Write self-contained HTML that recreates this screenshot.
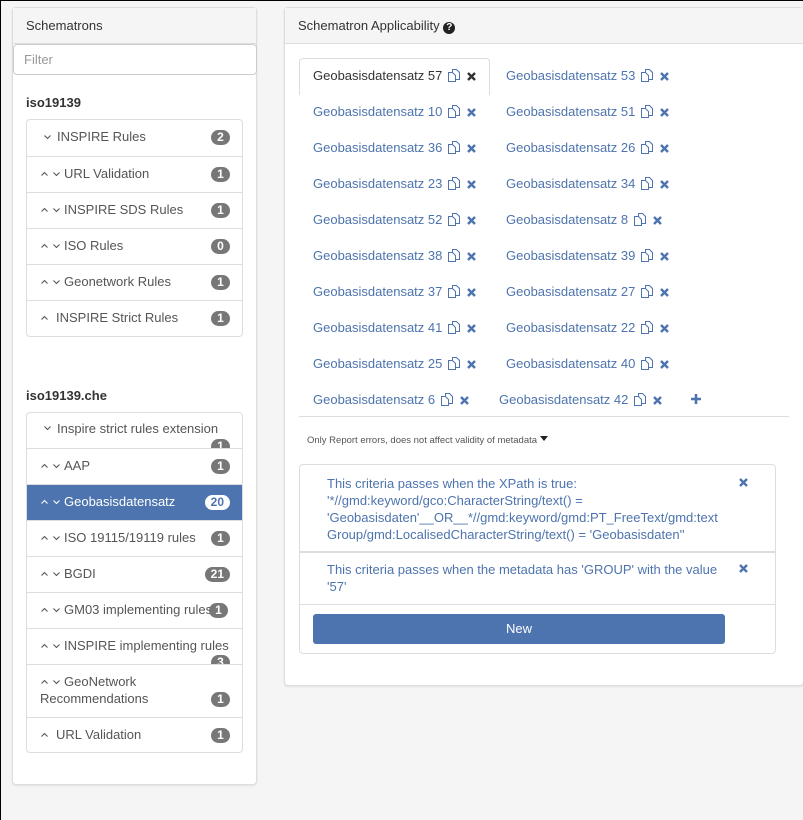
<!DOCTYPE html>
<html><head><meta charset="utf-8"><style>
*{box-sizing:border-box;margin:0;padding:0}
body{width:803px;height:820px;background:#f5f5f5;font-family:"Liberation Sans",sans-serif;font-size:13px;color:#333;position:relative;overflow:hidden}
.abs{position:absolute}
.panel{position:absolute;background:#fff;border:1px solid #ddd;border-radius:4px;box-shadow:0 1px 2px rgba(0,0,0,.08)}
.ph{position:absolute;left:0;right:0;top:0;height:36px;background:#f5f5f5;border-bottom:1px solid #ddd;padding:10px 13px;font-size:13px;color:#333}
.list{position:absolute;left:26px;width:217px;border:1px solid #ddd;border-radius:4px;background:#fff;overflow:hidden}
.row{position:relative;border-top:1px solid #ddd;height:36px;color:#555;font-size:13px;overflow:hidden}
.row:first-child{border-top:none}
.row .t{position:absolute;left:37px;top:9px}
.row .c{position:absolute;top:14px;left:14px;width:30px;height:6px}
.badge{position:absolute;right:12px;top:10px;min-width:19px;height:15px;border-radius:8px;background:#777;color:#fff;font-weight:bold;font-size:12px;line-height:15px;text-align:center;padding:0 6px}
.row.act{background:#4d74ae;color:#fff}
.row.act .badge{background:#fff;color:#4d74ae}
.tab{position:absolute;font-size:13px;color:#4d74ae;white-space:nowrap}
.tab svg{vertical-align:-2px;margin-left:6px}
.cr{position:absolute;left:27px;color:#4d74ae;font-size:13px;line-height:17px;width:410px}
</style></head><body>
<div class="abs" style="left:0;top:0;width:1px;height:820px;background:#000"></div>
<div class="abs" style="left:0;top:0;width:803px;height:1px;background:#000"></div>
<svg width="0" height="0" style="position:absolute"><defs>
<g id="up"><polyline points="0.5,4.5 3.5,1.5 6.5,4.5" fill="none" stroke="#555" stroke-width="1.1"/></g>
<g id="dn"><polyline points="0.5,1.5 3.5,4.5 6.5,1.5" fill="none" stroke="#555" stroke-width="1.1"/></g>
<g id="upw"><polyline points="0.5,4.5 3.5,1.5 6.5,4.5" fill="none" stroke="#fff" stroke-width="1.1"/></g>
<g id="dnw"><polyline points="0.5,1.5 3.5,4.5 6.5,1.5" fill="none" stroke="#fff" stroke-width="1.1"/></g>
<g id="cp"><path d="M4.5 0.5h4l3 3v7h-7z" fill="#fff" stroke="#4d74ae" stroke-width="1"/><path d="M0.5 3.5h4l3 3v6h-7z" fill="#fff" stroke="#4d74ae" stroke-width="1"/></g>
<g id="x"><path d="M2 2l7 7M9 2l-7 7" stroke="#4d74ae" stroke-width="2.4"/></g>
</defs></svg>

<div class="panel" style="left:12px;top:7px;width:245px;height:778px">
 <div class="ph">Schematrons</div>
 <div class="abs" style="left:0;top:36px;width:244px;height:31px;border:1px solid #ccc;border-radius:4px;padding:7px 10px;color:#999">Filter</div>
</div>
<div class="abs" style="left:26px;top:95px;font-weight:bold;font-size:13px;color:#333">iso19139</div>
<div class="list" style="top:119px">
 <div class="row"><svg class="c" style="left:17px"><use href="#dn"/></svg><span class="t" style="left:30px">INSPIRE Rules</span><span class="badge">2</span></div>
 <div class="row"><svg class="c"><use href="#up"/><use href="#dn" x="12"/></svg><span class="t">URL Validation</span><span class="badge">1</span></div>
 <div class="row"><svg class="c"><use href="#up"/><use href="#dn" x="12"/></svg><span class="t">INSPIRE SDS Rules</span><span class="badge">1</span></div>
 <div class="row"><svg class="c"><use href="#up"/><use href="#dn" x="12"/></svg><span class="t">ISO Rules</span><span class="badge">0</span></div>
 <div class="row"><svg class="c"><use href="#up"/><use href="#dn" x="12"/></svg><span class="t">Geonetwork Rules</span><span class="badge">1</span></div>
 <div class="row"><svg class="c"><use href="#up"/></svg><span class="t" style="left:29px">INSPIRE Strict Rules</span><span class="badge">1</span></div>
</div>
<div class="abs" style="left:26px;top:388px;font-weight:bold;font-size:13px;color:#333">iso19139.che</div>
<div class="list" style="top:412px">
 <div class="row" style="height:35px"><svg class="c" style="left:17px;top:12px"><use href="#dn"/></svg><span class="t" style="left:30px;top:8px">Inspire strict rules extension</span><span class="badge" style="top:26px">1</span></div>
 <div class="row"><svg class="c"><use href="#up"/><use href="#dn" x="12"/></svg><span class="t">AAP</span><span class="badge">1</span></div>
 <div class="row act"><svg class="c"><use href="#upw"/><use href="#dnw" x="12"/></svg><span class="t">Geobasisdatensatz</span><span class="badge">20</span></div>
 <div class="row"><svg class="c"><use href="#up"/><use href="#dn" x="12"/></svg><span class="t">ISO 19115/19119 rules</span><span class="badge">1</span></div>
 <div class="row"><svg class="c"><use href="#up"/><use href="#dn" x="12"/></svg><span class="t">BGDI</span><span class="badge">21</span></div>
 <div class="row"><svg class="c"><use href="#up"/><use href="#dn" x="12"/></svg><span class="t">GM03 implementing rules</span><span class="badge" style="right:14px">1</span></div>
 <div class="row"><svg class="c"><use href="#up"/><use href="#dn" x="12"/></svg><span class="t">INSPIRE implementing rules</span><span class="badge" style="top:26px">3</span></div>
 <div class="row" style="height:53px"><svg class="c"><use href="#up"/><use href="#dn" x="12"/></svg><span class="t">GeoNetwork</span><span class="t" style="left:13px;top:26px">Recommendations</span><span class="badge" style="top:27px">1</span></div>
 <div class="row" style="height:35px"><svg class="c"><use href="#up"/></svg><span class="t" style="left:29px">URL Validation</span><span class="badge">1</span></div>
</div>

<div class="panel" style="left:284px;top:7px;width:520px;height:679px">
 <div class="ph">Schematron Applicability <span style="display:inline-block;width:12px;height:12px;border-radius:50%;background:#222;color:#fff;font-size:10px;font-weight:bold;text-align:center;line-height:12px;vertical-align:0px">?</span></div>
</div>
<div class="abs" style="left:299px;top:58px;width:191px;height:37px;border:1px solid #ddd;border-bottom:none;border-radius:4px 4px 0 0;background:#fff"></div>
<div class="abs" style="left:299px;top:416px;width:490px;height:1px;background:#ddd"></div>

<div class="tab" style="left:313px;top:68px;color:#333">Geobasisdatensatz 57<svg width="12" height="13"><use href="#cp"/></svg><svg width="11" height="11"><path d="M2 2l7 7M9 2l-7 7" stroke="#333" stroke-width="2.4"/></svg></div>
<div class="tab" style="left:506px;top:68px">Geobasisdatensatz 53<svg width="12" height="13"><use href="#cp"/></svg><svg width="11" height="11"><use href="#x"/></svg></div>
<div class="tab" style="left:313px;top:104px">Geobasisdatensatz 10<svg width="12" height="13"><use href="#cp"/></svg><svg width="11" height="11"><use href="#x"/></svg></div>
<div class="tab" style="left:506px;top:104px">Geobasisdatensatz 51<svg width="12" height="13"><use href="#cp"/></svg><svg width="11" height="11"><use href="#x"/></svg></div>
<div class="tab" style="left:313px;top:140px">Geobasisdatensatz 36<svg width="12" height="13"><use href="#cp"/></svg><svg width="11" height="11"><use href="#x"/></svg></div>
<div class="tab" style="left:506px;top:140px">Geobasisdatensatz 26<svg width="12" height="13"><use href="#cp"/></svg><svg width="11" height="11"><use href="#x"/></svg></div>
<div class="tab" style="left:313px;top:176px">Geobasisdatensatz 23<svg width="12" height="13"><use href="#cp"/></svg><svg width="11" height="11"><use href="#x"/></svg></div>
<div class="tab" style="left:506px;top:176px">Geobasisdatensatz 34<svg width="12" height="13"><use href="#cp"/></svg><svg width="11" height="11"><use href="#x"/></svg></div>
<div class="tab" style="left:313px;top:212px">Geobasisdatensatz 52<svg width="12" height="13"><use href="#cp"/></svg><svg width="11" height="11"><use href="#x"/></svg></div>
<div class="tab" style="left:506px;top:212px">Geobasisdatensatz 8<svg width="12" height="13"><use href="#cp"/></svg><svg width="11" height="11"><use href="#x"/></svg></div>
<div class="tab" style="left:313px;top:248px">Geobasisdatensatz 38<svg width="12" height="13"><use href="#cp"/></svg><svg width="11" height="11"><use href="#x"/></svg></div>
<div class="tab" style="left:506px;top:248px">Geobasisdatensatz 39<svg width="12" height="13"><use href="#cp"/></svg><svg width="11" height="11"><use href="#x"/></svg></div>
<div class="tab" style="left:313px;top:284px">Geobasisdatensatz 37<svg width="12" height="13"><use href="#cp"/></svg><svg width="11" height="11"><use href="#x"/></svg></div>
<div class="tab" style="left:506px;top:284px">Geobasisdatensatz 27<svg width="12" height="13"><use href="#cp"/></svg><svg width="11" height="11"><use href="#x"/></svg></div>
<div class="tab" style="left:313px;top:320px">Geobasisdatensatz 41<svg width="12" height="13"><use href="#cp"/></svg><svg width="11" height="11"><use href="#x"/></svg></div>
<div class="tab" style="left:506px;top:320px">Geobasisdatensatz 22<svg width="12" height="13"><use href="#cp"/></svg><svg width="11" height="11"><use href="#x"/></svg></div>
<div class="tab" style="left:313px;top:356px">Geobasisdatensatz 25<svg width="12" height="13"><use href="#cp"/></svg><svg width="11" height="11"><use href="#x"/></svg></div>
<div class="tab" style="left:506px;top:356px">Geobasisdatensatz 40<svg width="12" height="13"><use href="#cp"/></svg><svg width="11" height="11"><use href="#x"/></svg></div>
<div class="tab" style="left:313px;top:392px">Geobasisdatensatz 6<svg width="12" height="13"><use href="#cp"/></svg><svg width="11" height="11"><use href="#x"/></svg></div>
<div class="tab" style="left:499px;top:392px">Geobasisdatensatz 42<svg width="12" height="13"><use href="#cp"/></svg><svg width="11" height="11"><use href="#x"/></svg></div>
<svg class="abs" style="left:690px;top:393px" width="12" height="12"><path d="M6 1v10M1 6h10" stroke="#4d74ae" stroke-width="2.6"/></svg>

<div class="abs" style="left:307px;top:435px;font-size:9.5px;color:#555">Only Report errors, does not affect validity of metadata <svg width="8" height="6" style="vertical-align:1px"><path d="M0 0h8l-4 5z" fill="#222"/></svg></div>

<div class="abs" style="left:299px;top:464px;width:477px;height:190px;border:1px solid #ddd;border-radius:4px;background:#fff">
 <div class="cr" style="top:10px">This criteria passes when the XPath is true:<br>'*//gmd:keyword/gco:CharacterString/text() =<br>'Geobasisdaten'__OR__*//gmd:keyword/gmd:PT_FreeText/gmd:text<br>Group/gmd:LocalisedCharacterString/text() = 'Geobasisdaten''</div>
 <svg class="abs" style="left:438px;top:12px" width="11" height="11"><use href="#x"/></svg>
 <div class="abs" style="left:0;top:86px;width:100%;height:2px;background:#ddd"></div>
 <div class="cr" style="top:96px">This criteria passes when the metadata has 'GROUP' with the value<br>'57'</div>
 <svg class="abs" style="left:438px;top:98px" width="11" height="11"><use href="#x"/></svg>
 <div class="abs" style="left:0;top:139px;width:100%;height:1px;background:#ddd"></div>
 <div class="abs" style="left:13px;top:149px;width:412px;height:30px;background:#4d74ae;border-radius:3px;color:#fff;text-align:center;line-height:30px;font-size:13px">New</div>
</div>
</body></html>
